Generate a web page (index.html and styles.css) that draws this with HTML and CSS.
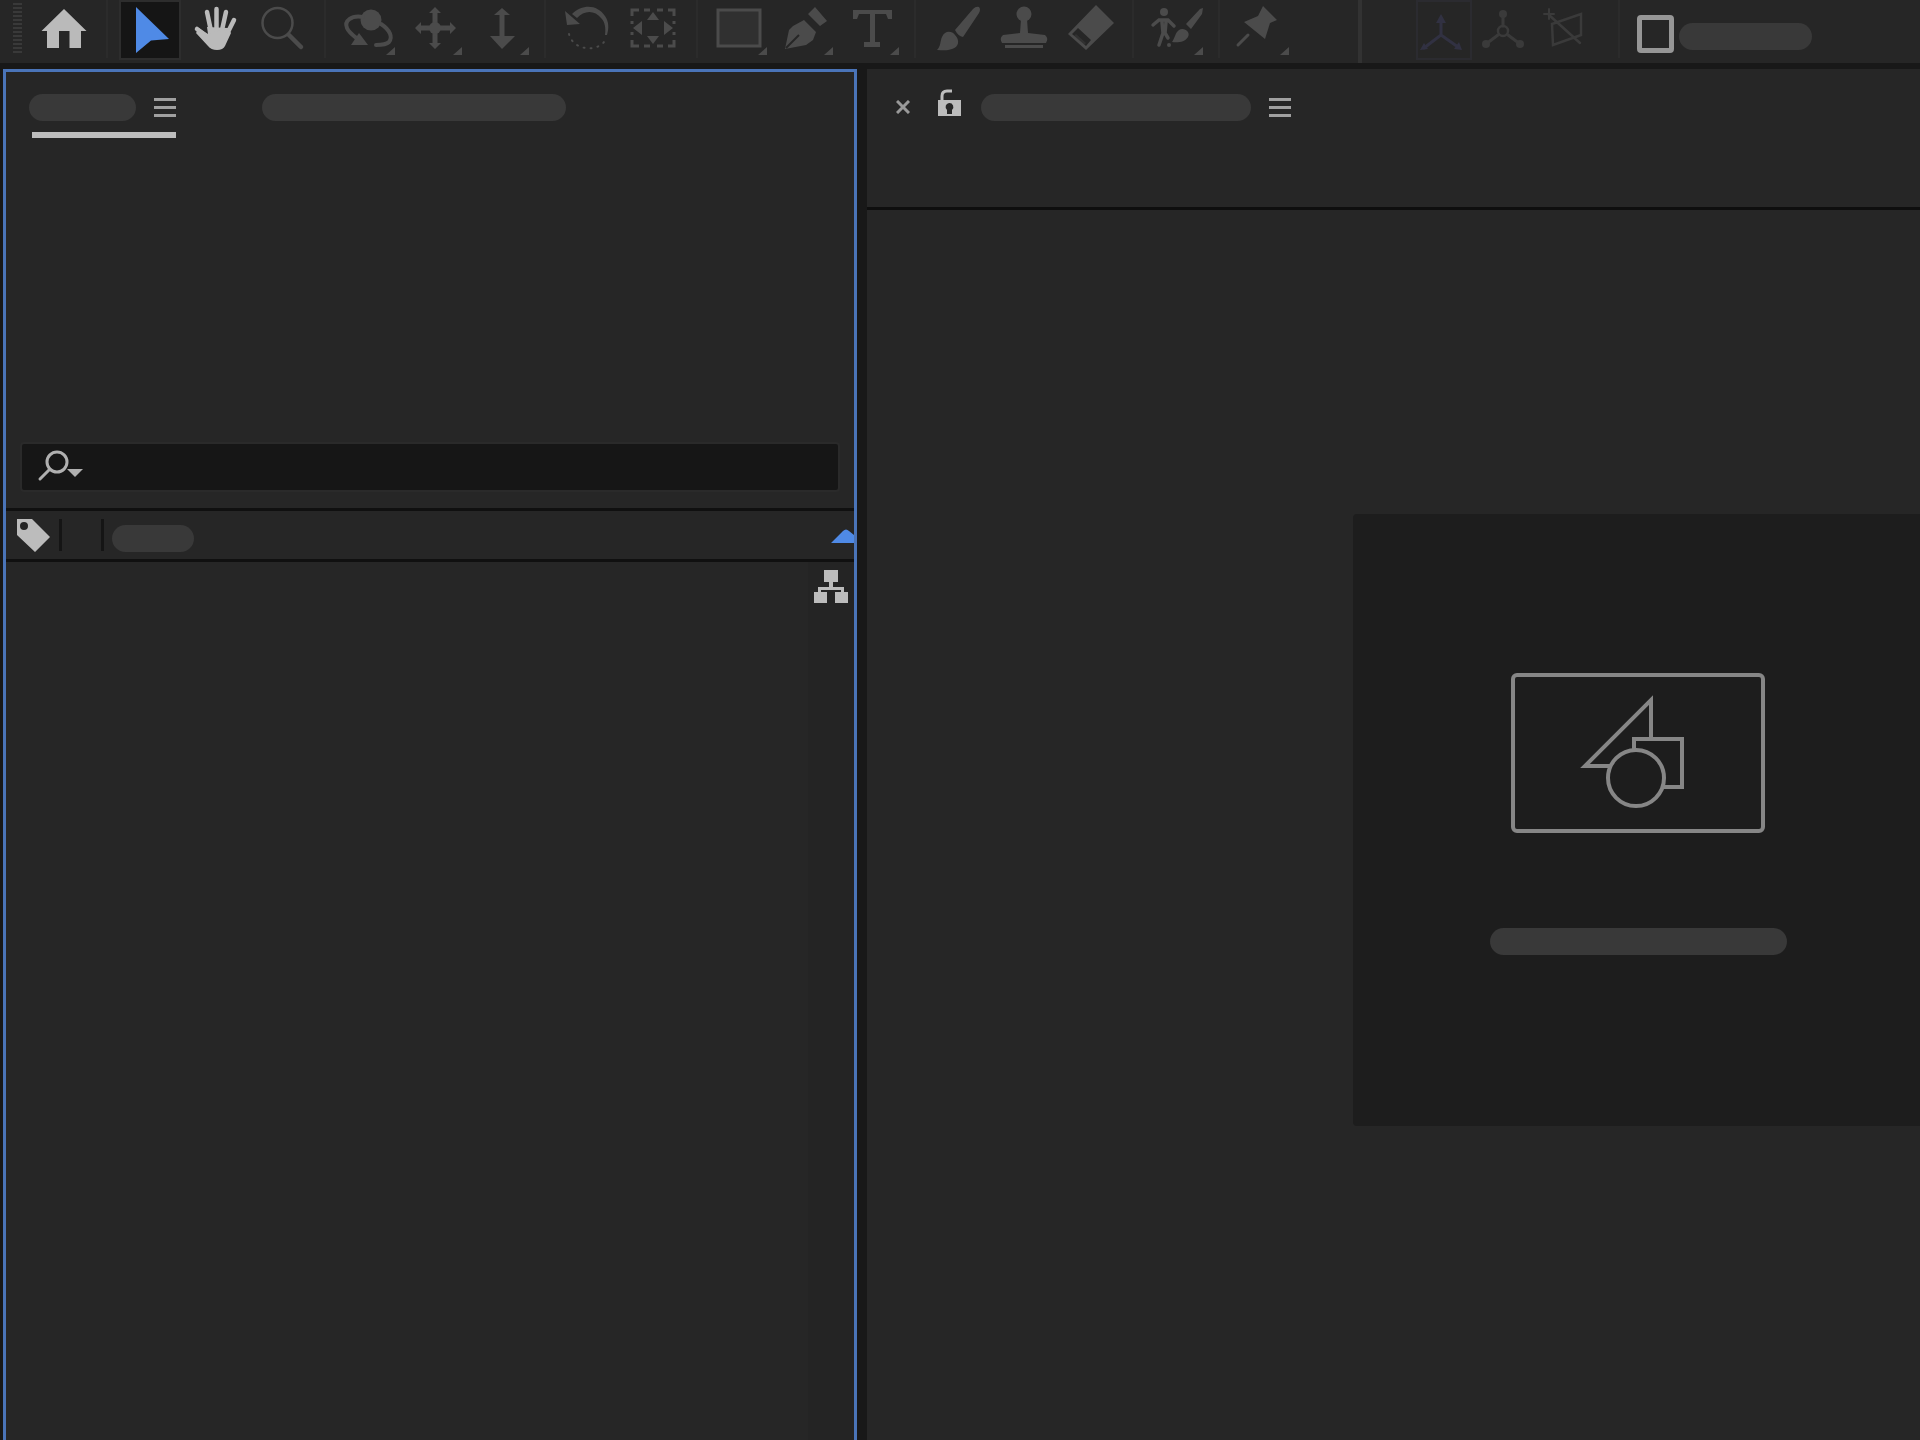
FILE: index.html
```
<!DOCTYPE html>
<html lang="en">
<head>
<meta charset="utf-8">
<meta name="viewport" content="width=device-width, initial-scale=1">
<title>Motion editor</title>
<link rel="stylesheet" href="styles.css">
</head>
<body>
<div class="app">
  <header class="toolbar" role="toolbar" aria-label="Tools">
    <span class="grip"></span>
    <button class="tool bright" aria-label="Home"><svg viewBox="0 0 66 60"><path d="M33 9 55.500 31H50V48H38.500V31H28V48H16V31H10.500Z"/></svg></button>
    <span class="divider"></span>
    <button class="tool selected" aria-label="Selection" aria-pressed="true"><svg viewBox="0 0 66 60"><path d="M19 7 52 39 34 40.500 19 53Z"/></svg></button>
    <button class="tool bright" aria-label="Hand"><svg viewBox="0 0 66 60"><path d="M24 27 45 28 48 33 42 46Q40 50 34 50 28 50 25 46L13 33 16 28 25 34Z"/><path class="line" stroke-width="4.500" d="M14 29 25 38M24 12 28 31M33.500 9V30M43 12 39 30M51 20 43 36"/></svg></button>
    <button class="tool" aria-label="Zoom"><svg viewBox="0 0 66 60"><circle class="line" cx="28.500" cy="23" r="15" stroke-width="2.500"/><path class="line" stroke-width="4.500" d="M40 35 52 47"/></svg></button>
    <span class="divider"></span>
    <div class="camera-tools">
      <button class="tool" aria-label="Orbit camera"><svg viewBox="0 0 66 60"><circle cx="36" cy="20" r="10.500"/><path class="line" stroke-width="4" d="M28 17C16 15 9 21 12 28 14 33 19 36 24 40M46 24C55 30 58 37 54 42 51 45 46 45 41 45"/><path d="M16 45H33L24 33Z"/><path class="more" d="M60 47V55H51Z"/></svg></button>
      <button class="tool" aria-label="Pan camera"><svg viewBox="0 0 66 60"><path class="line" stroke-width="5" d="M33 12V44M17 28H49"/><path d="M33 18 36 25 43 28 36 31 33 38 30 31 23 28 30 25ZM33 7 39 13H27ZM33 49 39 43H27ZM13 28 19 22V34ZM54 28 48 22V34Z"/><circle cx="33" cy="28" r="6"/><path class="more" d="M60 47V55H51Z"/></svg></button>
      <button class="tool" aria-label="Dolly camera"><svg viewBox="0 0 66 60"><path class="line" stroke-width="5" d="M33 13V40"/><path d="M33 8 41 15H25ZM21 36H46L33 49Z"/><path class="more" d="M60 47V55H51Z"/></svg></button>
    </div>
    <span class="divider"></span>
    <button class="tool" aria-label="Rotate"><svg viewBox="0 0 66 60"><path d="M17 14C28 3 43 5 50 16 54 22 54 28 52 35H50C51 28 50 22 46 18 40 10 29 10 22 18ZM10 11 25 24 12 25Z"/><path class="line" stroke-width="2" stroke-dasharray="1 6" d="M14 34C18 51 44 53 51 39"/></svg></button>
    <button class="tool" aria-label="Pan behind"><svg viewBox="0 0 66 60"><path class="flat" stroke-width="3" d="M11 16V10H18M23 10H29M36 10H42M47 10H53V16M11 21V24M11 32V35M53 21V24M53 32V35M11 40V46H18M23 46H29M36 46H42M47 46H53V40"/><path d="M32 12 38 20H26ZM32 44 38 36H26ZM12 28 21 21V35ZM52 28 43 21V35Z"/></svg></button>
    <span class="divider"></span>
    <button class="tool" aria-label="Rectangle"><svg viewBox="0 0 66 60"><rect class="flat shaded" x="11" y="10" width="42" height="36" stroke-width="3"/><path class="more" d="M60 47V55H51Z"/></svg></button>
    <button class="tool" aria-label="Pen"><svg viewBox="0 0 66 60"><path d="M42 7 54 21 47 26 35 14ZM12 49 16 30 20 26 31 20 43 32 40 40 33 45Z"/><path class="cut" d="M13 48 26 35"/><path class="more" d="M60 47V55H51Z"/></svg></button>
    <button class="tool" aria-label="Type"><svg viewBox="0 0 66 60"><path d="M14 10H53V19H49L47 14H36V42H41V47H25V42H31V14H20L18 19H14Z"/><path class="more" d="M60 47V55H51Z"/></svg></button>
    <span class="divider"></span>
    <button class="tool" aria-label="Brush"><svg viewBox="0 0 66 60"><path d="M54 7Q56 9 54 13L38 37Q33 36 30 30L48 9Q51 6 54 7ZM12 50C16 46 15 41 17 37 20 30 27 31 30 35 35 40 34 47 27 49 22 51 17 50 12 50Z"/></svg></button>
    <button class="tool" aria-label="Clone stamp"><svg viewBox="0 0 66 60"><circle cx="33" cy="14" r="7.500"/><path d="M30 19H36L37 33 54 35Q58 38 55 43H11Q8 38 12 35L29 33ZM14 45H52V48H14Z"/></svg></button>
    <button class="tool" aria-label="Eraser"><svg viewBox="0 0 66 60"><path fill-rule="evenodd" d="M39 5 57 23 29 50 11 34ZM21 28 15 34 29 46 34 40Z"/><path d="M19 34 29 43 27 45 17 36Z" opacity=".3"/></svg></button>
    <span class="divider"></span>
    <button class="tool" aria-label="Roto brush"><svg viewBox="0 0 66 60"><circle cx="21" cy="12" r="4"/><path class="line" stroke-width="3.500" d="M10 25 16 20H25L31 26M19 22 20 33 16 45M23 22 22 33 25 38"/><path d="M60 8 59 14 48 29 43 24 57 9ZM29 42C32 38 32 33 36 30 41 27 48 32 45 37 42 42 35 43 29 42Z"/><circle cx="26" cy="45" r="2"/><path class="more" d="M60 47V55H51Z"/></svg></button>
    <span class="divider"></span>
    <button class="tool" aria-label="Puppet pin"><svg viewBox="0 0 66 60"><path d="M34 6 48 20 41 23 36 39 15 22 29 16Z"/><path class="line" stroke-width="3" d="M19 35 9 45"/><path class="more" d="M60 47V55H51Z"/></svg></button>
    <span class="divider strong"></span>
    <div class="axis-tools">
      <button class="axis active" aria-label="Local axis" aria-pressed="true"><svg viewBox="0 0 56 60"><path class="line" stroke-width="3" d="M25 19V35L8 48M25 35 42 47"/><path d="M25 14 30 23H20ZM4 50 8 43 12 49ZM46 50 38 49 43 42Z"/></svg></button>
      <button class="axis" aria-label="World axis"><svg viewBox="0 0 56 60"><path class="line" stroke-width="3" d="M26 14V26M21 35 9 44M31 35 43 44"/><circle class="line" cx="26" cy="31" r="5" stroke-width="2.500"/><circle cx="26" cy="14" r="4"/><circle cx="9" cy="44" r="4"/><circle cx="43" cy="44" r="4"/></svg></button>
      <button class="axis" aria-label="View axis"><svg viewBox="0 0 56 60"><path class="line" stroke-width="2.500" d="M14 24 43 14V35L15 45ZM11 15 42 43"/><path class="line" stroke-width="2" d="M6 14H16M11 9V19"/></svg></button>
    </div>
    <span class="divider"></span>
    <label class="snapping"><input type="checkbox" aria-label="Snapping"><span class="skeleton w-snap"></span></label>
  </header>

  <main class="workspace">
    <section class="panel project" aria-label="Project">
      <nav class="tabs">
        <div class="tab current"><span class="skeleton w-tab"></span><button class="menu" aria-label="Panel menu"><i></i><i></i><i></i></button></div>
        <div class="tab"><span class="skeleton w-tab-long"></span></div>
      </nav>
      <div class="preview"></div>
      <div class="search">
        <svg viewBox="0 0 46 32"><circle class="line" cx="20" cy="11" r="10" stroke-width="3"/><path class="line" stroke-width="3" d="M13 18 3 28"/><path d="M30 18H46L38 26Z"/></svg>
        <input type="search" aria-label="Search project">
      </div>
      <div class="columns">
        <svg class="tag" viewBox="0 0 33 33"><path fill-rule="evenodd" d="M0 0H15L33 18 18 33 0 16ZM7 3A4 4 0 1 0 7 11A4 4 0 1 0 7 3Z"/></svg>
        <span class="column label-column"></span>
        <span class="column name-column"><span class="skeleton w-name"></span></span>
        <svg class="sort" viewBox="0 0 23 14"><path d="M0 14 12 2Q15 -1 18 2L23 6V14Z"/></svg>
      </div>
      <div class="list">
        <div class="side">
          <button class="flow" aria-label="Flowchart"><svg viewBox="0 0 36 33"><path d="M11 0H25V12H20V17H31V22H35V33H22V22H28V20H8V22H14V33H1V22H5V17H16V12H11Z"/></svg></button>
        </div>
      </div>
    </section>

    <section class="panel composition" aria-label="Composition">
      <div class="viewer-tabs">
        <button class="close" aria-label="Close"><svg viewBox="0 0 14 14"><path class="flat" stroke-width="3" d="M1 1 13 13M13 1 1 13"/></svg></button>
        <button class="lock" aria-label="Lock"><svg viewBox="0 0 23 27"><path class="flat" stroke-width="3" d="M4 13V7Q4 2 9 2H14"/><path fill-rule="evenodd" d="M0 11H23V27H0ZM11 14A4 4 0 0 0 9 21V25H14V21A4 4 0 0 0 11 14Z"/></svg></button>
        <span class="skeleton w-title"></span>
        <button class="menu" aria-label="Viewer menu"><i></i><i></i><i></i></button>
      </div>
      <div class="viewer">
        <button class="card" aria-label="New composition">
          <svg viewBox="0 0 254 160"><rect x="2" y="2" width="250" height="156" rx="4"/><path d="M107 93H74L140 27V66M123 78V66H171V114H152"/><circle cx="125" cy="105" r="28"/></svg>
          <span class="skeleton w-card"></span>
        </button>
      </div>
    </section>
  </main>
</div>
</body>
</html>
```
FILE: styles.css
```
* { box-sizing: border-box; }

body {
  margin: 0;
  background: #181818;
  font-family: "Open Sans", sans-serif;
}

button {
  border: 0;
  padding: 0;
  background: none;
  color: inherit;
}

svg {
  display: block;
  fill: currentColor;
}

.line,
.flat {
  fill: none;
  stroke: currentColor;
}

.line { stroke-linecap: round; }

.app {
  display: flex;
  flex-direction: column;
  min-height: 100vh;
  overflow: hidden;
}

/* Placeholder bars */
.skeleton {
  display: block;
  flex: none;
  height: 27px;
  border-radius: 14px;
  background: #393939;
}
.w-snap { width: 133px; }
.w-tab { width: 107px; }
.w-tab-long { width: 304px; }
.w-name { width: 82px; }
.w-title { width: 270px; }
.w-card { width: 297px; }

/* Toolbar */
.toolbar {
  display: flex;
  height: 63px;
  padding-left: 13px;
  background: #262626;
  color: #4b4b4b;
}

.grip {
  flex: none;
  width: 9px;
  height: 52px;
  margin: 3px 9px 0 0;
  background: repeating-linear-gradient(#393939 0 2px, #262626 2px 4px);
}

.tool {
  flex: none;
  width: 66px;
  height: 60px;
}

.bright { color: #bababa; }

.selected {
  color: #4f8ae6;
  width: 58px;
  height: 56px;
  margin: 2px 4px 0;
  background: #151515;
  outline: 2px solid #2d2d2d;
}

.selected svg {
  width: 66px;
  height: 60px;
  margin: -2px -4px;
}

.more { fill: #4b4b4b; }
.shaded { fill: #303030; }

.cut {
  stroke: #262626;
  stroke-width: 2;
}

.camera-tools {
  display: flex;
  gap: 1px;
}

.divider {
  flex: none;
  width: 2px;
  height: 58px;
  margin: 0 9px;
  background: #2b2b2b;
}

.strong {
  width: 4px;
  height: 63px;
  margin: 0 54px 0 63px;
  background: #323232;
}

.axis-tools {
  display: flex;
  gap: 5px;
  margin-right: 15px;
}

.axis {
  width: 56px;
  height: 60px;
  color: #3a3a3a;
}

.active {
  color: #313142;
  box-shadow: inset 0 0 0 2px #2b2b30;
}

.snapping {
  display: flex;
  align-items: center;
  gap: 5px;
  height: 58px;
  margin: 6px 0 0 8px;
}

.snapping input {
  appearance: none;
  width: 37px;
  height: 38px;
  margin: 0 0 3px;
  border: 5px solid #969696;
  border-radius: 4px;
}

.snapping .skeleton { margin-top: 2px; }

/* Workspace */
.workspace {
  display: grid;
  grid-template-columns: 45% 1fr;
  flex: 1;
  padding-top: 6px;
}

.panel {
  display: flex;
  flex-direction: column;
  min-width: 0;
  background: #262626;
}

.project {
  margin: 0 7px 0 3px;
  border: 3px solid #4a74b8;
  border-bottom: 0;
}

.tabs {
  display: flex;
  gap: 86px;
  padding: 21px 23px 0;
}

.tab {
  display: flex;
  align-items: center;
  gap: 18px;
  height: 45px;
  padding-bottom: 16px;
}

/* Underline of the open tab, inset a little from the bar's left edge */
.current {
  background: linear-gradient(#bdbdbd, #bdbdbd) right bottom / calc(100% - 3px) 6px no-repeat;
}

.menu {
  display: flex;
  flex-direction: column;
  gap: 5px;
  width: 22px;
}

.menu i {
  height: 3px;
  background: #a0a0a0;
}

.preview { height: 304px; }

.search {
  display: flex;
  align-items: center;
  height: 50px;
  margin: 0 14px 16px;
  padding-left: 15px;
  background: #161616;
  border: 2px solid #2a2a2a;
  border-radius: 4px;
  color: #b0b0b0;
}

.search svg {
  width: 46px;
  height: 32px;
  overflow: visible;
}

.search input {
  flex: 1;
  border: 0;
  outline: 0;
  background: none;
  color: #b0b0b0;
  font: inherit;
}

.columns {
  display: flex;
  align-items: center;
  height: 54px;
  padding-left: 11px;
  border: solid #101010;
  border-width: 3px 0;
}

.tag {
  width: 33px;
  height: 33px;
  margin-right: 9px;
  color: #bcbcbc;
}

.column {
  height: 32px;
  border-left: 3px solid #151515;
}

.label-column { width: 42px; }

.name-column {
  display: flex;
  flex: 1;
  align-items: center;
  padding: 6px 0 0 8px;
}

.sort {
  width: 23px;
  height: 14px;
  margin-top: 2px;
  color: #4f8ae6;
}

.list {
  display: flex;
  flex: 1;
  justify-content: flex-end;
}

.side {
  width: 46px;
  padding: 8px 0 0 5px;
  background: #242424;
}

.flow {
  width: 36px;
  height: 33px;
  color: #bcbcbc;
}

/* Composition viewer */
.composition { margin-left: 3px; }

.viewer-tabs {
  display: flex;
  align-items: center;
  height: 141px;
  padding: 0 0 62px 29px;
  border-bottom: 3px solid #0e0e0e;
}

.close {
  width: 14px;
  height: 14px;
  margin-right: 28px;
  color: #999999;
}

.lock {
  width: 23px;
  height: 36px;
  margin-right: 20px;
  color: #bcbcbc;
}

.lock svg { height: 27px; }

.viewer-tabs .lock { padding-bottom: 10px; }
.viewer-tabs .menu { margin-left: 18px; }

.viewer {
  display: flex;
  padding: 304px 0 0 486px;
}

.card {
  display: flex;
  flex: 1;
  flex-direction: column;
  align-items: center;
  gap: 95px;
  height: 612px;
  margin-right: -3px;
  padding-top: 159px;
  background: #1d1d1d;
  border-radius: 4px;
}

.card svg {
  width: 254px;
  height: 160px;
  fill: #1d1d1d;
  stroke: #868686;
  stroke-width: 4;
}
```
